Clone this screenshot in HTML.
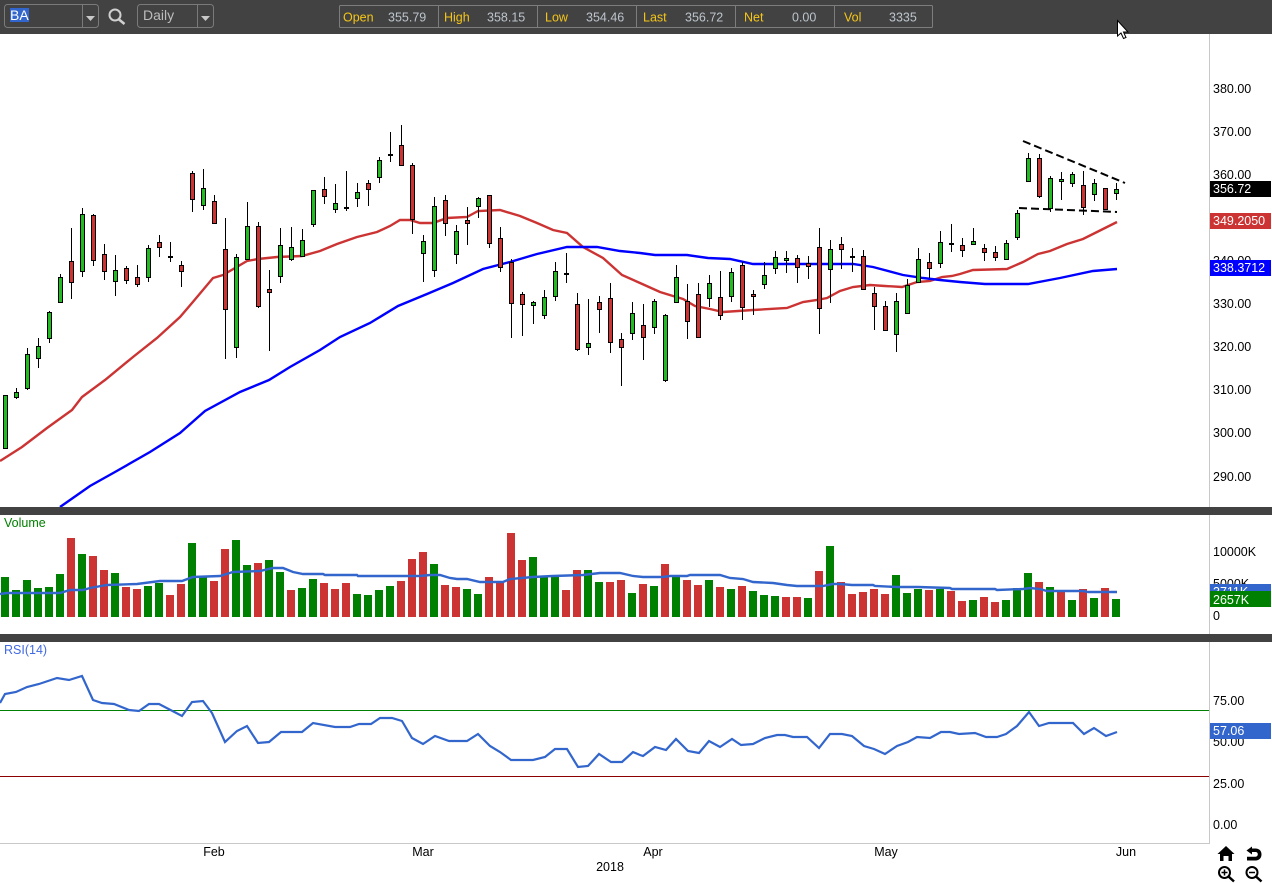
<!DOCTYPE html>
<html><head><meta charset="utf-8"><title>BA Daily</title>
<style>
html,body{margin:0;padding:0;background:#fff;width:1272px;height:883px;overflow:hidden}
svg{display:block}
text{font-family:"Liberation Sans",sans-serif;font-size:12.5px}
</style></head><body>
<svg width="1272" height="883" viewBox="0 0 1272 883" xmlns="http://www.w3.org/2000/svg">
<rect width="1272" height="883" fill="#fff"/>
<!-- panel frames -->
<path d="M1209.5 34V843.5H0" fill="none" stroke="#c8c8c8"/>

<!-- RSI guide lines -->
<path d="M0 710.5H1209" stroke="#008000"/>
<path d="M0 776.5H1209" stroke="#8b0000"/>

<!-- Moving averages -->
<path fill="none" stroke="#cc3333" stroke-width="2.4" d="M0 461L22 447L47 428L72 410L82 397L105 380L133 357L157 338L180 317L192 303L213 278L223 275L247 261L258 259L277 257L302 256L320 251L337 244L357 237L377 232L390 226L400 220L410 220L420 223L433 223L447 218L467 217L478 211L500 210L520 216L537 223L553 230L567 233L583 247L603 258L622 275L640 283L660 292L673 296L683 299L695 306L710 309L723 312L753 310L787 308L803 302L817 300L827 298L840 291L853 287L870 285L885 286L902 287L917 282L930 281L942 277L952 276L960 274L973 270L1007 269L1023 262L1038 254L1050 251L1067 244L1083 239L1097 232L1117 222"/>
<path fill="none" stroke="#0000ff" stroke-width="2.4" d="M60 507L90 486L115 472L150 452L180 433L205 411L240 392L269 380L290 367L320 350L340 337L370 323L398 306L427 294L453 283L483 269L510 262L537 254L567 247L597 247L620 251L640 253L655 255L687 255L708 258L730 259L753 264L853 264L873 267L903 275L923 278L940 280L960 282L985 284L1028 284L1060 278L1093 271L1117 269"/>

<!-- Candle wicks -->
<path fill="none" stroke="#000" d="M5.5 395V449M16.5 388V399M27.5 348V390M38.5 338V368M49.5 311V343M60.5 274V302M71.5 228V299M82.5 208V277M93.5 214V266M104.5 244V280M115.5 255V296M126.5 266V284M137.5 265V287M148.5 245V282M159.5 235V257M170.5 242V262M181.5 261V287M192.5 171V212M203.5 169V210M214.5 195V223M225.5 218V359M236.5 254V358M247.5 202V259M258.5 222V308M269.5 270V351M280.5 228V283M291.5 227V261M302.5 229V257M313.5 190V227M324.5 177V204M335.5 184V213M346.5 171V211M357.5 183V207M368.5 180V206M379.5 157V183M390.5 132V162M401.5 125V165M412.5 163V234M423.5 235V282M434.5 197V277M445.5 195V236M456.5 225V264M467.5 207V245M478.5 197V218M489.5 195V248M500.5 227V272M511.5 259V338M522.5 292V336M533.5 301V324M544.5 290V319M555.5 262V301M566.5 253V283M577.5 293V351M588.5 299V355M599.5 296V333M610.5 283V353M621.5 333V386M632.5 302V340M643.5 304V360M654.5 299V334M665.5 314V382M676.5 265V303M687.5 284V339M698.5 283V338M709.5 275V307M720.5 271V320M731.5 268V302M742.5 262V320M753.5 290V315M764.5 262V289M775.5 251V274M786.5 251V273M797.5 255V283M808.5 256V279M819.5 228V334M830.5 240V303M841.5 237V269M852.5 248V272M863.5 250V289M874.5 287V330M885.5 301V331M896.5 293V352M907.5 279V313M918.5 248V282M929.5 253V278M940.5 231V268M951.5 224V252M962.5 238V257M973.5 228V244M984.5 244V261M995.5 246V261M1006.5 240V260M1017.5 210V240M1028.5 153V181M1039.5 154V198M1050.5 176V212M1061.5 172V200M1072.5 172V187M1083.5 171V215M1094.5 179V201M1105.5 188V209M1116.5 183V200"/>
<!-- Doji bars -->
<path fill="none" stroke="#000" stroke-width="2" d="M168 257h5M344 208h5M388 155h5M564 274h5M850 257h5M949 244h5"/>
<!-- Green bodies -->
<path fill="#22bb22" stroke="#000" d="M3.5 395.5h4v53h-4zM14.5 392.5h4v5h-4zM25.5 354.5h4v34h-4zM36.5 346.5h4v12h-4zM47.5 312.5h4v26h-4zM58.5 277.5h4v25h-4zM80.5 214.5h4v57h-4zM113.5 270.5h4v11h-4zM146.5 248.5h4v29h-4zM201.5 188.5h4v17h-4zM234.5 257.5h4v90h-4zM245.5 226.5h4v33h-4zM278.5 245.5h4v31h-4zM289.5 247.5h4v12h-4zM300.5 240.5h4v16h-4zM311.5 190.5h4v34h-4zM333.5 203.5h4v6h-4zM355.5 192.5h4v6h-4zM377.5 160.5h4v17h-4zM421.5 241.5h4v12h-4zM432.5 206.5h4v64h-4zM454.5 231.5h4v23h-4zM476.5 198.5h4v8h-4zM531.5 302.5h4v3h-4zM542.5 297.5h4v18h-4zM553.5 271.5h4v25h-4zM586.5 343.5h4v4h-4zM630.5 313.5h4v20h-4zM652.5 301.5h4v26h-4zM663.5 315.5h4v65h-4zM674.5 277.5h4v25h-4zM707.5 283.5h4v15h-4zM729.5 272.5h4v24h-4zM762.5 275.5h4v9h-4zM773.5 257.5h4v11h-4zM784.5 258.5h4v2h-4zM828.5 249.5h4v20h-4zM894.5 301.5h4v33h-4zM905.5 285.5h4v28h-4zM916.5 259.5h4v23h-4zM938.5 242.5h4v21h-4zM971.5 241.5h4v3h-4zM1004.5 243.5h4v16h-4zM1015.5 213.5h4v24h-4zM1026.5 158.5h4v23h-4zM1048.5 178.5h4v30h-4zM1059.5 179.5h4v2h-4zM1070.5 174.5h4v9h-4zM1092.5 183.5h4v11h-4zM1114.5 189.5h4v4h-4z"/>
<!-- Red bodies -->
<path fill="#cc3333" stroke="#000" d="M69.5 261.5h4v21h-4zM91.5 215.5h4v45h-4zM102.5 254.5h4v17h-4zM124.5 268.5h4v12h-4zM135.5 277.5h4v7h-4zM157.5 242.5h4v5h-4zM179.5 265.5h4v6h-4zM190.5 173.5h4v26h-4zM212.5 201.5h4v22h-4zM223.5 249.5h4v60h-4zM256.5 226.5h4v80h-4zM267.5 289.5h4v3h-4zM322.5 189.5h4v7h-4zM366.5 183.5h4v6h-4zM399.5 145.5h4v20h-4zM410.5 165.5h4v54h-4zM443.5 200.5h4v23h-4zM465.5 220.5h4v3h-4zM487.5 195.5h4v48h-4zM498.5 238.5h4v29h-4zM509.5 262.5h4v41h-4zM520.5 294.5h4v10h-4zM575.5 304.5h4v45h-4zM597.5 302.5h4v7h-4zM608.5 298.5h4v44h-4zM619.5 339.5h4v8h-4zM641.5 325.5h4v12h-4zM685.5 301.5h4v20h-4zM696.5 294.5h4v43h-4zM718.5 297.5h4v18h-4zM740.5 265.5h4v42h-4zM751.5 294.5h4v2h-4zM795.5 258.5h4v9h-4zM806.5 263.5h4v3h-4zM817.5 247.5h4v61h-4zM839.5 244.5h4v5h-4zM861.5 256.5h4v33h-4zM872.5 293.5h4v13h-4zM883.5 306.5h4v24h-4zM927.5 262.5h4v6h-4zM960.5 245.5h4v5h-4zM982.5 248.5h4v4h-4zM993.5 252.5h4v5h-4zM1037.5 158.5h4v38h-4zM1081.5 185.5h4v22h-4zM1103.5 188.5h4v21h-4z"/>

<!-- Trendlines -->
<path d="M1023 141L1125 183" stroke="#000" stroke-width="2" stroke-dasharray="8 4" fill="none"/>
<path d="M1019 208L1117 212" stroke="#000" stroke-width="2" stroke-dasharray="8 4" fill="none"/>

<!-- Price axis -->
<g fill="#000">
<text x="1213" y="93">380.00</text>
<text x="1213" y="136">370.00</text>
<text x="1213" y="179">360.00</text>
<text x="1213" y="265">340.00</text>
<text x="1213" y="308">330.00</text>
<text x="1213" y="351">320.00</text>
<text x="1213" y="394">310.00</text>
<text x="1213" y="437">300.00</text>
<text x="1213" y="481">290.00</text>
</g>
<rect x="1210" y="181" width="61" height="16" fill="#000"/>
<text x="1213" y="193" fill="#fff">356.72</text>
<rect x="1210" y="213" width="61" height="16" fill="#cc3333"/>
<text x="1213" y="225" fill="#fff">349.2050</text>
<rect x="1210" y="260" width="61" height="16" fill="#0000ff"/>
<text x="1213" y="272" fill="#fff">338.3712</text>

<!-- Volume bars -->
<path fill="#008000" d="M1 577h8V617h-8zM12 590h8V617h-8zM23 580h8V617h-8zM34 588h8V617h-8zM45 587h8V617h-8zM56 574h8V617h-8zM78 554h8V617h-8zM111 573h8V617h-8zM144 586h8V617h-8zM155 583h8V617h-8zM188 543h8V617h-8zM199 577h8V617h-8zM232 540h8V617h-8zM243 565h8V617h-8zM265 560h8V617h-8zM276 572h8V617h-8zM298 588h8V617h-8zM309 579h8V617h-8zM353 594h8V617h-8zM364 595h8V617h-8zM375 590h8V617h-8zM386 586h8V617h-8zM430 564h8V617h-8zM463 589h8V617h-8zM474 594h8V617h-8zM529 557h8V617h-8zM540 577h8V617h-8zM551 575h8V617h-8zM584 570h8V617h-8zM595 582h8V617h-8zM628 593h8V617h-8zM650 586h8V617h-8zM672 575h8V617h-8zM705 580h8V617h-8zM727 589h8V617h-8zM749 591h8V617h-8zM760 595h8V617h-8zM771 596h8V617h-8zM804 598h8V617h-8zM826 546h8V617h-8zM892 575h8V617h-8zM903 593h8V617h-8zM914 589h8V617h-8zM936 589h8V617h-8zM969 600h8V617h-8zM1002 600h8V617h-8zM1013 588h8V617h-8zM1024 573h8V617h-8zM1046 587h8V617h-8zM1068 600h8V617h-8zM1090 598h8V617h-8zM1112 599h8V617h-8z"/>
<path fill="#cc3333" d="M67 538h8V617h-8zM89 556h8V617h-8zM100 570h8V617h-8zM122 587h8V617h-8zM133 589h8V617h-8zM166 595h8V617h-8zM177 584h8V617h-8zM210 581h8V617h-8zM221 549h8V617h-8zM254 563h8V617h-8zM287 590h8V617h-8zM320 583h8V617h-8zM331 589h8V617h-8zM342 583h8V617h-8zM397 581h8V617h-8zM408 559h8V617h-8zM419 552h8V617h-8zM441 585h8V617h-8zM452 587h8V617h-8zM485 577h8V617h-8zM496 582h8V617h-8zM507 533h8V617h-8zM518 560h8V617h-8zM562 590h8V617h-8zM573 570h8V617h-8zM606 582h8V617h-8zM617 580h8V617h-8zM639 584h8V617h-8zM661 564h8V617h-8zM683 580h8V617h-8zM694 585h8V617h-8zM716 587h8V617h-8zM738 586h8V617h-8zM782 597h8V617h-8zM793 597h8V617h-8zM815 571h8V617h-8zM837 582h8V617h-8zM848 594h8V617h-8zM859 592h8V617h-8zM870 589h8V617h-8zM881 594h8V617h-8zM925 590h8V617h-8zM947 591h8V617h-8zM958 601h8V617h-8zM980 597h8V617h-8zM991 602h8V617h-8zM1035 582h8V617h-8zM1057 592h8V617h-8zM1079 589h8V617h-8zM1101 588h8V617h-8z"/>
<path fill="none" stroke="#3366cc" stroke-width="2.4" d="M0 594L7 593L60 593L70 590L83 590L90 588L107 585L137 584L160 581L182 581L193 577L220 576L233 572L260 571L273 568L283 568L293 572L303 574L323 574L325 575L357 575L358 576L420 576L430 575L440 575L450 578L457 579L467 579L480 582L503 582L510 579L533 577L553 576L583 575L600 573L620 573L633 576L643 577L663 577L670 576L687 576L690 575L720 575L730 578L743 579L753 582L773 583L787 585L797 586L823 586L833 584L840 584L852 585L873 585L875 586L897 587L918 587L950 588L952 589L995 589L997 590L1023 589L1030 588L1040 589L1047 591L1083 591L1088 592L1117 592"/>
<text x="4" y="527" fill="#008000">Volume</text>
<text x="1213" y="556" fill="#000">10000K</text>
<text x="1213" y="588" fill="#000">5000K</text>
<rect x="1210" y="584" width="61" height="16" fill="#3366cc"/>
<text x="1213" y="596" fill="#fff">3711K</text>
<rect x="1210" y="591" width="61" height="16" fill="#008000"/>
<text x="1213" y="604" fill="#fff">2657K</text>
<text x="1213" y="620" fill="#000">0</text>

<!-- RSI -->
<path fill="none" stroke="#3366cc" stroke-width="2.2" d="M0 703L5 694L16 692L27 687L39 684L57 678L69 680L82 676L93 700L102 703L114 704L129 710L139 711L149 704L159 704L182 716L192 702L203 701L212 713L225 742L237 731L247 726L258 743L269 742L281 732L302 732L313 723L335 727L350 727L359 724L371 724L380 718L392 718L402 721L412 738L423 744L435 736L449 741L467 741L478 734L490 746L500 752L511 760L533 760L545 757L555 749L567 749L578 767L588 766L599 754L611 762L622 762L633 752L640 755L643 756L655 747L666 750L676 739L688 751L699 753L709 741L720 747L732 739L741 745L753 744L765 738L777 735L785 735L793 737L807 737L819 748L830 734L842 734L852 736L864 746L874 749L885 754L897 746L908 742L917 737L930 738L941 732L950 732L959 734L975 733L986 737L997 737L1006 734L1017 726L1029 712L1039 726L1049 723L1073 723L1084 734L1094 728L1106 736L1117 732"/>
<text x="4" y="654" fill="#4169e1">RSI(14)</text>
<g fill="#000">
<text x="1213" y="705">75.00</text>
<text x="1213" y="746">50.00</text>
<text x="1213" y="788">25.00</text>
<text x="1213" y="829">0.00</text>
</g>
<rect x="1210" y="723" width="61" height="16" fill="#3366cc"/>
<text x="1213" y="735" fill="#fff">57.06</text>

<!-- Dark separators -->
<rect x="0" y="507" width="1272" height="8" fill="#424242"/>
<rect x="0" y="634" width="1272" height="8" fill="#424242"/>

<!-- Date axis -->
<g fill="#000" text-anchor="middle">
<text x="214" y="856">Feb</text>
<text x="423" y="856">Mar</text>
<text x="653" y="856">Apr</text>
<text x="886" y="856">May</text>
<text x="1126" y="856">Jun</text>
<text x="610" y="871">2018</text>
</g>

<!-- Toolbar -->
<rect x="0" y="0" width="1272" height="34" fill="#424242"/>
<rect x="4.5" y="4.5" width="94" height="23" rx="3" fill="none" stroke="#7a7a7a"/>
<path d="M82.5 5V27" stroke="#7a7a7a"/>
<rect x="10" y="8" width="19" height="14" fill="#3366cc"/>
<text x="10" y="20" fill="#fff" style="font-size:14px">BA</text>
<path d="M86 16H95L90.5 21Z" fill="#c8c8c8"/>
<circle cx="115" cy="15" r="5.5" fill="none" stroke="#d0d0d0" stroke-width="2"/>
<path d="M119 19.5L124.5 24" stroke="#d0d0d0" stroke-width="2.5"/>
<rect x="137.5" y="4.5" width="76" height="23" rx="3" fill="none" stroke="#7a7a7a"/>
<path d="M197.5 5V27" stroke="#7a7a7a"/>
<text x="143" y="20" fill="#bdbdbd" style="font-size:14px">Daily</text>
<path d="M201 16H210L205.5 21Z" fill="#c8c8c8"/>

<rect x="339.5" y="5.5" width="593" height="22" rx="1" fill="none" stroke="#7d7d7d"/>
<path d="M438.5 6V27M537.5 6V27M636.5 6V27M735.5 6V27M834.5 6V27" stroke="#7d7d7d"/>
<g fill="#f5c518">
<text x="343" y="21.5">Open</text>
<text x="444" y="21.5">High</text>
<text x="545" y="21.5">Low</text>
<text x="643" y="21.5">Last</text>
<text x="744" y="21.5">Net</text>
<text x="844" y="21.5">Vol</text>
</g>
<g fill="#bcc4cc">
<text x="388" y="21.5">355.79</text>
<text x="487" y="21.5">358.15</text>
<text x="586" y="21.5">354.46</text>
<text x="685" y="21.5">356.72</text>
<text x="792" y="21.5">0.00</text>
<text x="889" y="21.5">3335</text>
</g>

<!-- Mouse cursor -->
<path d="M1117.5 20.5V36L1121 33L1123.5 38.5L1126 37.5L1123.5 32H1128Z" fill="#fff" stroke="#000"/>

<!-- Corner icons -->
<path d="M1226 846L1234.5 854H1232V861H1228.5V856H1223.5V861H1220V854H1217.5Z" fill="#000"/>
<path d="M1252 846.5L1246.5 850.5L1252 854.5V852H1255.5C1257.2 852 1257.8 853.2 1257.8 854.3C1257.8 855.6 1257 856.7 1255.5 856.7H1247V860.5H1255.5C1259.5 860.5 1261.5 857.8 1261.5 854.3C1261.5 851 1259.3 848.5 1255.5 848.5H1252Z" fill="#000"/>
<circle cx="1224.5" cy="872.5" r="5.5" fill="none" stroke="#000" stroke-width="2"/>
<path d="M1221.5 872.5H1227.5M1224.5 869.5V875.5" stroke="#000" stroke-width="1.5"/>
<path d="M1228.5 876.5L1234 881.5" stroke="#000" stroke-width="2.5"/>
<circle cx="1252" cy="872.5" r="5.5" fill="none" stroke="#000" stroke-width="2"/>
<path d="M1249 872.5H1255" stroke="#000" stroke-width="1.5"/>
<path d="M1256 876.5L1261.5 881.5" stroke="#000" stroke-width="2.5"/>
</svg>
</body></html>
